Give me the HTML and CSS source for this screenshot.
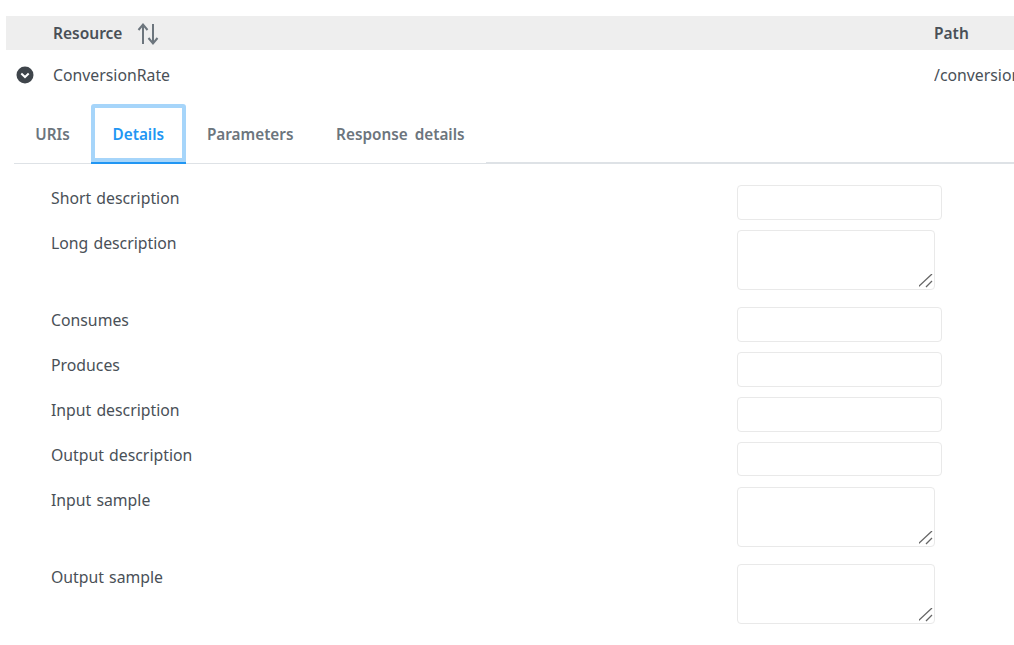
FILE: index.html
```html
<!DOCTYPE html>
<html lang="en">
<head>
<meta charset="utf-8">
<title>Resources</title>
<link rel="stylesheet" href="styles.css">
</head>
<body>
<div class="page">
  <div class="head-row">
    <div class="col-toggle"></div>
    <div class="col-resource head-cell">Resource
      <svg class="sort" width="22" height="24" viewBox="0 0 22 24" fill="none" stroke="#6c757d" stroke-width="2"><path d="M6 22V3M1.500 8L6 2.500L10.500 8"/><path d="M16 2V21M11.500 16L16 21.500L20.500 16"/></svg>
    </div>
    <div class="col-path head-cell">Path</div>
  </div>
  <div class="data-row">
    <div class="col-toggle">
      <svg class="chev" width="18" height="18" viewBox="0 0 18 18"><circle cx="9" cy="9" r="8.500" fill="#3f454b"/><path d="M5.300 7.500L9 11L12.700 7.500" fill="none" stroke="#fff" stroke-width="2"/></svg>
    </div>
    <div class="col-resource">ConversionRate</div>
    <div class="col-path">/conversionRate</div>
  </div>
  <div class="tabs">
    <a class="tab">URIs</a>
    <a class="tab active">Details</a>
    <a class="tab">Parameters</a>
    <a class="tab">Response details</a>
    <div class="tab-rest"></div>
  </div>
  <form class="details">
    <label>Short description</label><input type="text">
    <label>Long description</label><textarea></textarea>
    <label>Consumes</label><input type="text">
    <label>Produces</label><input type="text">
    <label>Input description</label><input type="text">
    <label>Output description</label><input type="text" class="short">
    <label>Input sample</label><textarea></textarea>
    <label>Output sample</label><textarea></textarea>
  </form>
</div>
</body>
</html>
```
FILE: styles.css
```css
* { box-sizing: border-box; }
html, body { margin: 0; padding: 0; overflow: hidden; background: #fff; }
body { font-family: "Noto Sans", "Open Sans", sans-serif; font-size: 15.800px; color: #495057; }
.page { width: 1014px; height: 645px; padding: 16px 0 0 6px; overflow: hidden; }
.head-row { display: flex; align-items: center; height: 34px; background: #eeeeee; font-size: 15.500px; font-weight: 600; color: #495057; padding-bottom: 1px; }
.data-row { display: flex; align-items: center; height: 50px; }
.col-toggle { width: 47px; flex: none; display: flex; padding-left: 10px; }
.col-resource { width: 881px; flex: none; display: flex; align-items: center; }
.col-path { flex: none; white-space: nowrap; width: 80px; overflow: hidden; }
.sort { margin-left: 15px; margin-top: 2px; }
.tabs { display: flex; height: 60px; margin: 4px 0 0 8px; }
.tab { display: flex; align-items: center; padding: 0 21.300px; font-size: 15.300px; word-spacing: 3px; font-weight: 600; color: #6c757d; border-bottom: 1px solid #dee2e6; }
.tab.active { color: #2196f3; box-shadow: inset 0 0 0 4px #a6d5fa; border-bottom: 2px solid #2196f3; border-radius: 3px 3px 0 0; padding: 1px 21.500px 0; }
.tab-rest { flex: 1; border-bottom: 2px solid #dee2e6; }
.details { display: grid; grid-template-columns: 686px 1fr; margin: 21px 0 0 45px; row-gap: 10px; align-items: start; justify-items: start; }
.details label { padding-top: 2px; line-height: 22px; word-spacing: 1px; }
.details input { display: block; width: 205px; height: 35px; margin: 0; border: 1px solid #e9e9e9; border-radius: 4px; background: #fff; }
.details input.short { height: 34px; margin-bottom: 1px; }
.details textarea { display: block; width: 198px; height: 60px; margin: 0 0 7px; border: 1px solid #e9e9e9; border-radius: 4px; background: #fff; }
.details textarea::-webkit-resizer {
  background: url("data:image/svg+xml,%3Csvg xmlns='http://www.w3.org/2000/svg' width='16' height='16'%3E%3Cpath d='M0 14L14 1M8 14L14 8' stroke='%23666' stroke-width='1.300' fill='none'/%3E%3C/svg%3E") no-repeat right bottom;
}
```
